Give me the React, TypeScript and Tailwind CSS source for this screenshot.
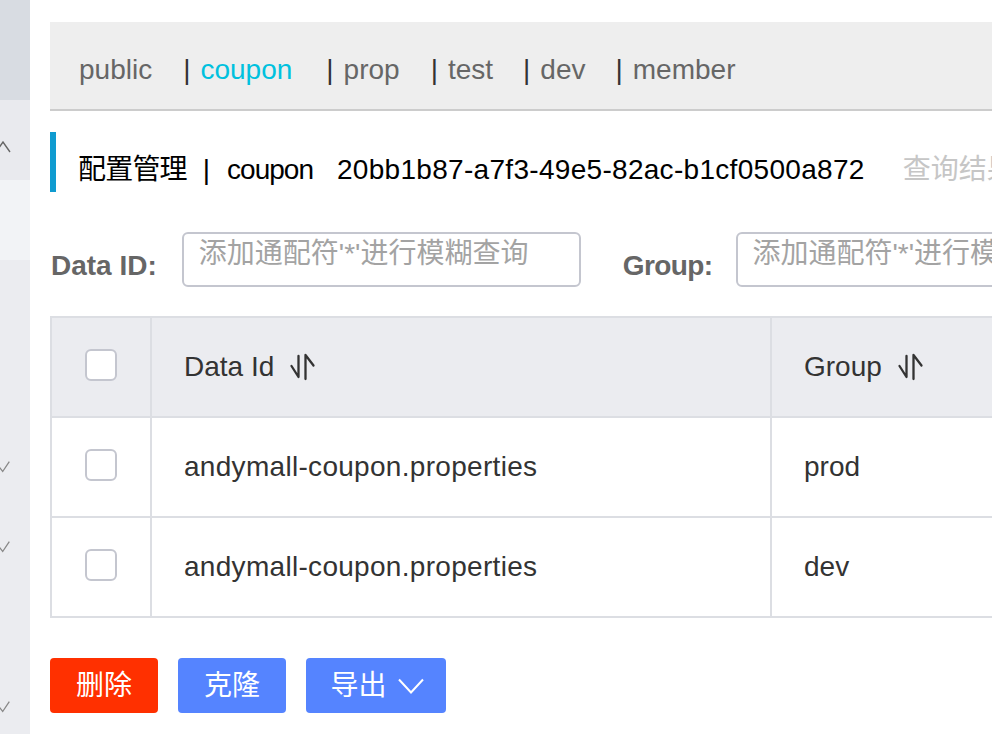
import React from "react";

const namespaces = ["public", "coupon", "prop", "test", "dev", "member"];
const nsGap = ["", "ml-[31px]", "ml-[34px]", "ml-[31px]", "ml-[30px]", "ml-[30px]"];

const rows = [
    { dataId: "andymall-coupon.properties", group: "prod" },
    { dataId: "andymall-coupon.properties", group: "dev" },
];

export default function App() {
    return <div className="w-[992px] h-[734px] overflow-hidden flex bg-white font-['Liberation_Sans','Noto_Sans_CJK_SC',sans-serif]">
        <Sidebar />
        <main className="flex-1 min-w-0 overflow-hidden">
            <div className="w-[1120px] pl-[20px] pt-[22px]">
                <NamespaceBar />
                <PageTitle />
                <Filters />
                <ConfigTable />
                <div className="flex gap-[20px] mt-[40px]">
                    <button className="w-[108px] h-[55px] rounded-[4px] bg-[#ff3000] text-white text-[28px] leading-[32px]">删除</button>
                    <button className="w-[108px] h-[55px] rounded-[4px] bg-[#5584ff] text-white text-[28px] leading-[32px]">克隆</button>
                    <button className="w-[140px] h-[55px] rounded-[4px] bg-[#5584ff] text-white text-[28px] leading-[32px] flex items-center justify-center gap-[11px] pl-[2px]">
                        导出
                        <svg width="26" height="16" viewBox="0 0 26 16" fill="none" stroke="white" strokeWidth="2">
                            <polyline points="1,1.5 13,14.5 25,1.5" />
                        </svg>
                    </button>
                </div>
            </div>
        </main>
    </div>
}

function Sidebar() {
    return <aside className="w-[30px] shrink-0 flex flex-col">
        <div className="h-[100px] bg-[#d8dce2]" />
        <div className="h-[80px] bg-[#e9eaee] pt-[41px]">
            <svg width="12" height="12" viewBox="0 0 12 12" fill="none" stroke="#666" strokeWidth="1.4">
                <polyline points="-4,11 3,1 10,11" />
            </svg>
        </div>
        <div className="h-[80px] bg-[#f2f3f6]" />
        <div className="flex-1 bg-[#ebecf0] flex flex-col">
            <Check className="mt-[200px]" />
            <Check className="mt-[67px]" />
            <Check className="mt-[147px]" />
        </div>
    </aside>
}

function Check({ className }: { className: string }) {
    return <svg className={className} width="11" height="13" viewBox="0 0 11 13" fill="none" stroke="#888" strokeWidth="1.3">
        <polyline points="-2,5.5 2.7,11.5 9.3,1.7" />
    </svg>
}

function NamespaceBar() {
    return <div className="h-[89px] bg-[#eeeeee] border-b-2 border-[#cccccc] pl-[29px] pt-[9px] flex items-center text-[28px] leading-[32px] whitespace-nowrap">
        {namespaces.map((ns, i) => (
            <span key={ns} className={nsGap[i]}>
                {i > 0 && <span className="text-[#333]">|</span>}
                <span className={(i > 0 ? "ml-[10px] " : "") + (ns === "coupon" ? "text-[#00c1de]" : "text-[#666]")}>{ns}</span>
            </span>
        ))}
    </div>
}

function PageTitle() {
    return <div className="mt-[21px] h-[60px] border-l-[6px] border-[#0f9bd0] pl-[22px] pt-[22px] text-[28px] leading-[32px] whitespace-nowrap text-black overflow-hidden">
        <span className="tracking-[-0.8px]">配置管理</span>
        <span className="ml-[16px] mr-[17px]">|</span>
        <span className="tracking-[-1px]">coupon</span>
        <span className="ml-[24px] tracking-[0.3px]">20bb1b87-a7f3-49e5-82ac-b1cf0500a872</span>
        <span className="ml-[38px] text-[#c6c6c6]">查询结果：共查询到 2 条满足要求的配置。</span>
    </div>
}

function Filters() {
    return <div className="mt-[40px] h-[55px] flex items-center whitespace-nowrap">
        <label className="pt-[12px] text-[28px] leading-[32px] font-bold text-[#666] mr-[25px] pl-[1px]">Data ID:</label>
        <input className="w-[399px] h-[55px] border-2 border-[#c4c6cf] rounded-[6px] pl-[15px] pb-[12px] text-[28px] placeholder:text-[#a3a3a3] outline-none" placeholder="添加通配符'*'进行模糊查询" />
        <label className="pt-[12px] text-[28px] leading-[32px] font-bold text-[#666] ml-[42px] mr-[23px] tracking-[-0.6px]">Group:</label>
        <input className="w-[399px] h-[55px] border-2 border-[#c4c6cf] rounded-[6px] pl-[15px] pb-[12px] text-[28px] placeholder:text-[#a3a3a3] outline-none" placeholder="添加通配符'*'进行模糊查询" />
    </div>
}

function SortIcon() {
    return <svg className="ml-[15px]" width="27" height="28" viewBox="0 0 27 28" fill="none" stroke="#333" strokeWidth="2.3" strokeLinecap="round" strokeLinejoin="round">
        <path d="M9.5 3V24L2.5 13" />
        <path d="M16.5 26V2L24.5 12.5" />
    </svg>
}

function Box() {
    return <span className="w-[32px] h-[32px] mb-[4px] rounded-[6px] border-2 border-[#c4c6cf] bg-white" />
}

function ConfigTable() {
    return <div className="mt-[29px] border-2 border-[#dcdee3] text-[28px] leading-[32px] text-[#333] whitespace-nowrap">
        <div className="grid grid-cols-[100px_620px_1fr] h-[98px] bg-[#ebecf0]">
            <div className="border-r-2 border-[#dcdee3] flex items-center justify-center"><Box /></div>
            <div className="border-r-2 border-[#dcdee3] flex items-center pl-[32px]">Data Id<SortIcon /></div>
            <div className="flex items-center pl-[32px]">Group<SortIcon /></div>
        </div>
        {rows.map((r, i) => (
            <div key={i} className="grid grid-cols-[100px_620px_1fr] h-[100px] border-t-2 border-[#dcdee3]">
                <div className="border-r-2 border-[#dcdee3] flex items-center justify-center"><Box /></div>
                <div className="border-r-2 border-[#dcdee3] flex items-center pl-[32px] tracking-[0.3px]">{r.dataId}</div>
                <div className="flex items-center pl-[32px]">{r.group}</div>
            </div>
        ))}
    </div>
}
